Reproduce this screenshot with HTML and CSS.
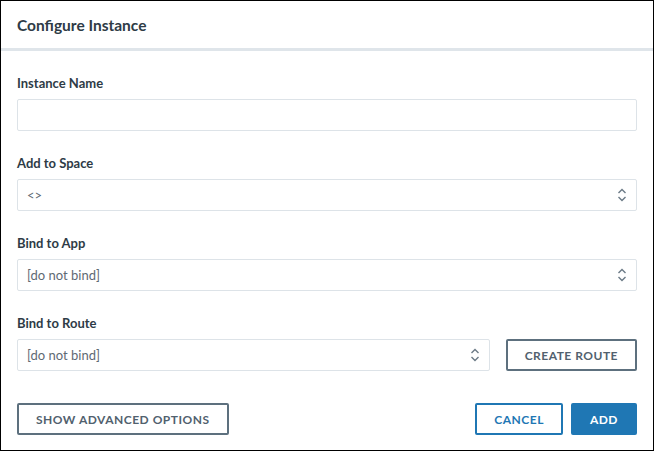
FILE: index.html
```html
<!DOCTYPE html>
<html>
<head>
<meta charset="utf-8">
<link rel="stylesheet" href="styles.css">
</head>
<body>
<div class="dialog">
  <div class="header"><h1 class="title">Configure Instance</h1></div>
  <div class="sep"></div>
  <div class="body">
    <div class="field">
      <label class="label">Instance Name</label>
      <div class="input"></div>
    </div>
    <div class="field">
      <label class="label">Add to Space</label>
      <div class="input select"><span class="value">&lt;&gt;</span>
        <svg class="chev" width="10" height="14" viewBox="0 0 10 14"><polyline points="1.5,5 5,1.5 8.5,5" fill="none" stroke="#6b7a86" stroke-width="1.4"/><polyline points="1.5,9 5,12.5 8.5,9" fill="none" stroke="#6b7a86" stroke-width="1.4"/></svg>
      </div>
    </div>
    <div class="field">
      <label class="label">Bind to App</label>
      <div class="input select"><span class="value">[do not bind]</span>
        <svg class="chev" width="10" height="14" viewBox="0 0 10 14"><polyline points="1.5,5 5,1.5 8.5,5" fill="none" stroke="#6b7a86" stroke-width="1.4"/><polyline points="1.5,9 5,12.5 8.5,9" fill="none" stroke="#6b7a86" stroke-width="1.4"/></svg>
      </div>
    </div>
    <div class="field">
      <label class="label">Bind to Route</label>
      <div class="row">
        <div class="input select grow"><span class="value">[do not bind]</span>
          <svg class="chev" width="10" height="14" viewBox="0 0 10 14"><polyline points="1.5,5 5,1.5 8.5,5" fill="none" stroke="#6b7a86" stroke-width="1.4"/><polyline points="1.5,9 5,12.5 8.5,9" fill="none" stroke="#6b7a86" stroke-width="1.4"/></svg>
        </div>
        <button class="btn btn-gray">Create Route</button>
      </div>
    </div>
    <div class="footer">
      <button class="btn btn-gray">Show Advanced Options</button>
      <div class="actions">
        <button class="btn btn-outline">Cancel</button>
        <button class="btn btn-primary">Add</button>
      </div>
    </div>
  </div>
</div>
</body>
</html>
```
FILE: styles.css
```css
* { box-sizing: border-box; }
html, body { margin: 0; padding: 0; background: #fff; }
body { font-family: "Lato", "Open Sans", sans-serif; color: #2e3b46; }

.dialog {
  width: 654px;
  height: 451px;
  border: 1px solid #000;
  background: #fff;
  display: flex;
  flex-direction: column;
}

.header {
  height: 47px;
  padding: 0 16px;
  display: flex;
  align-items: center;
}
.title {
  margin: 0;
  font-size: 15.5px;
  font-weight: 700;
  color: #2e3b46;
}
.sep { height: 3px; background: #dfe5ea; }

.body {
  padding: 22px 16px 0;
  display: flex;
  flex-direction: column;
  gap: 22px;
}
.field { display: flex; flex-direction: column; gap: 6px; }
.label {
  height: 20px;
  line-height: 20px;
  font-size: 13px;
  font-weight: 700;
  color: #2e3b46;
}
.input {
  height: 32px;
  border: 1px solid #dde3e8;
  border-radius: 2px;
  background: #fff;
}
.select {
  display: flex;
  align-items: center;
  justify-content: space-between;
  padding: 0 9px 0 9px;
}
.value { font-size: 13px; color: #5f6a74; }
.chev { display: block; }

.row { display: flex; gap: 16px; align-items: center; }
.grow { flex: 1; }

.btn {
  height: 32px;
  padding: 0 17px;
  border: 2px solid #5d707e;
  border-radius: 2px;
  background: #fff;
  font-family: inherit;
  font-size: 12px;
  font-weight: 700;
  letter-spacing: 0.5px;
  text-transform: uppercase;
  color: #51616e;
  cursor: pointer;
}
.btn-outline { border-color: #1f77b4; color: #1f77b4; }
.btn-primary { border-color: #1f77b4; background: #1f77b4; color: #fff; }

.footer {
  margin-top: 10px;
  display: flex;
  justify-content: space-between;
  align-items: center;
}
.actions { display: flex; gap: 8px; }
```
